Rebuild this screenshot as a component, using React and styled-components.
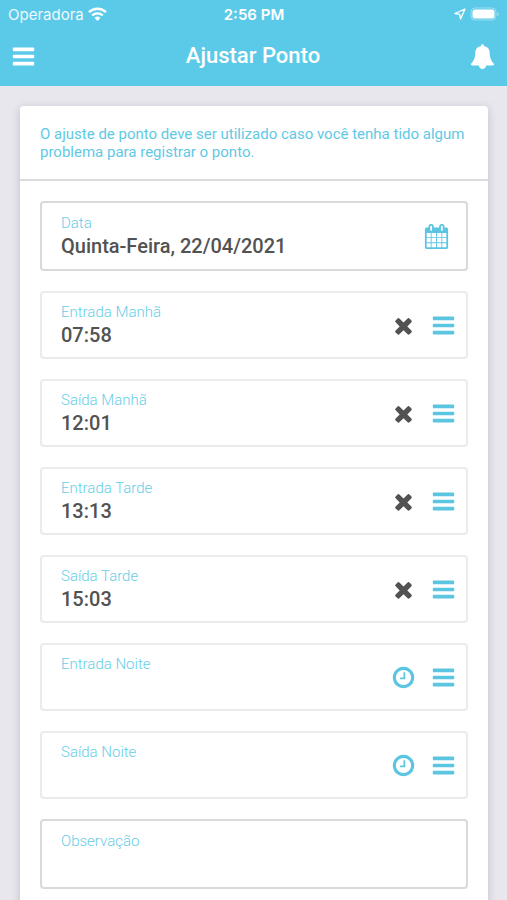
import React, { useState } from 'react'
import styled, { createGlobalStyle } from 'styled-components';

const GlobalStyle = createGlobalStyle`
  * {
    box-sizing: border-box;
  }
  body {
    margin: 0;
    background: #E8E7ED;
    font-family: Roboto, "Liberation Sans", sans-serif;
  }
`;

const Page = styled.div`
  height: 100vh;
  display: flex;
  flex-direction: column;
`;

const Header = styled.header`
  flex: none;
  background: #5BCAE8;
  color: #FFF;
`;

const StatusBar = styled.div`
  display: grid;
  grid-template-columns: 1fr auto 1fr;
  align-items: center;
  height: 28px;
  padding: 0 7px 0 8px;
  font-family: Inter, "Liberation Sans", sans-serif;
  font-size: 15px;
`;

const StatusGroup = styled.div`
  display: flex;
  align-items: center;
  justify-content: ${props => props.$align || 'flex-start'};
  gap: 4px;
`;

const Carrier = styled.span`
  opacity: 0.9;
`;

const Clock = styled.span`
  font-weight: 600;
`;

const NavBar = styled.div`
  display: grid;
  grid-template-columns: 1fr auto 1fr;
  align-items: center;
  height: 58px;
  padding: 0 12px 2px 11px;
`;

const Title = styled.h1`
  margin: 0;
  font-size: 22px;
  line-height: 26px;
  font-weight: 500;
`;

const IconButton = styled.button`
  display: flex;
  flex: none;
  justify-self: ${props => props.$align || 'auto'};
  padding: 0;
  border: none;
  background: none;
  color: ${props => props.$color || '#5BC5E2'};
  cursor: pointer;
`;

const Content = styled.main`
  flex: 1;
  min-height: 0;
  padding: 20px 19px 20px 20px;
  overflow-y: auto;
  scrollbar-width: none;
`;

const Card = styled.section`
  border-radius: 4px;
  background: #FFF;
  box-shadow: 0 2px 10px rgba(60, 55, 90, 0.22);
`;

const Notice = styled.p`
  margin: 0;
  padding: 19px 20px 18px;
  border-bottom: 2px solid #DCDCDC;
  color: #5FC9E5;
  font-size: 15px;
  line-height: 18px;
`;

const Form = styled.form`
  display: flex;
  flex-direction: column;
  gap: 20px;
  padding: 20px;
`;

const Field = styled.div`
  display: flex;
  align-items: center;
  gap: 15px;
  height: ${props => props.$strong ? '70px' : '68px'};
  padding: 0 ${props => props.$strong ? '17px' : '10px'} 0 19px;
  border: 2px solid ${props => props.$strong ? '#D9D9D9' : '#EBEBEB'};
  border-radius: 4px;
`;

const FieldText = styled.div`
  display: flex;
  flex: 1;
  flex-direction: column;
  min-width: 0;
`;

const Label = styled.label`
  color: #67CDE8;
  font-size: 15px;
  line-height: 20px;
  font-weight: 300;
`;

const Input = styled.input`
  width: 100%;
  height: 26px;
  padding: 0;
  border: none;
  outline: none;
  background: none;
  color: #525252;
  font-family: inherit;
  font-size: 20px;
  line-height: 26px;
  font-weight: 500;
  resize: none;
`;

const icons = {
  bars: 'M1664 1344v128q0 26-19 45t-45 19h-1408q-26 0-45-19t-19-45v-128q0-26 19-45t45-19h1408q26 0 45 19t19 45zm0-512v128q0 26-19 45t-45 19h-1408q-26 0-45-19t-19-45v-128q0-26 19-45t45-19h1408q26 0 45 19t19 45zm0-512v128q0 26-19 45t-45 19h-1408q-26 0-45-19t-19-45v-128q0-26 19-45t45-19h1408q26 0 45 19t19 45z',
  times: 'M1490 1322q0 40-28 68l-136 136q-28 28-68 28t-68-28l-294-294-294 294q-28 28-68 28t-68-28l-136-136q-28-28-28-68t28-68l294-294-294-294q-28-28-28-68t28-68l136-136q28-28 68-28t68 28l294 294 294-294q28-28 68-28t68 28l136 136q28 28 28 68t-28 68l-294 294 294 294q28 28 28 68z',
  clock: 'M1024 544v448q0 14-9 23t-23 9h-320q-14 0-23-9t-9-23v-64q0-14 9-23t23-9h224v-352q0-14 9-23t23-9h64q14 0 23 9t9 23zm416 352q0-148-73-273t-198-198-273-73-273 73-198 198-73 273 73 273 198 198 273 73 273-73 198-198 73-273zm224 0q0 209-103 385.5t-279.5 279.5-385.5 103-385.5-103-279.5-279.5-103-385.5 103-385.5 279.5-279.5 385.5-103 385.5 103 279.5 279.5 103 385.5z',
  calendar: 'M192 1664h288v-288h-288v288zm352 0h320v-288h-320v288zm-352-352h288v-320h-288v320zm352 0h320v-320h-320v320zm-352-384h288v-288h-288v288zm736 736h320v-288h-320v288zm-384-736h320v-288h-320v288zm768 736h288v-288h-288v288zm-384-352h320v-320h-320v320zm-352-864v-288q0-13-9.500-22.500t-22.500-9.500h-64q-13 0-22.500 9.500t-9.500 22.500v288q0 13 9.500 22.500t22.500 9.500h64q13 0 22.500-9.500t9.500-22.500zm736 864h288v-320h-288v320zm-384-384h320v-288h-320v288zm384 0h288v-288h-288v288zm32-480v-288q0-13-9.500-22.500t-22.500-9.500h-64q-13 0-22.500 9.500t-9.500 22.500v288q0 13 9.500 22.500t22.500 9.500h64q13 0 22.500-9.500t9.500-22.500zm384-64v1280q0 52-38 90t-90 38h-1408q-52 0-90-38t-38-90v-1280q0-52 38-90t90-38h128v-96q0-66 47-113t113-47h64q66 0 113 47t47 113v96h384v-96q0-66 47-113t113-47h64q66 0 113 47t47 113v96h128q52 0 90 38t38 90z',
  bell: 'M1728 1408q0 52-38 90t-90 38h-448q0 106-75 181t-181 75-181-75-75-181h-448q-52 0-90-38t-38-90q50-42 91-88t85-119.500 74.500-158.500 50-206 19.500-260q0-152 117-282.500t307-158.500q-8-19-8-39 0-40 28-68t68-28 68 28 28 68q0 20-8 39 190 28 307 158.500t117 282.500q0 139 19.500 260t50 206 74.500 158.500 85 119.500 91 88z',
};

const Icon = ({name}) => (
  <svg width="25" height="25" viewBox="0 0 1792 1792" fill="currentColor" aria-hidden="true">
    <path d={icons[name]} />
  </svg>
)

const WifiIcon = () => (
  <svg width="19" height="14" viewBox="0 0 19 14" fill="none" stroke="currentColor" strokeWidth="2.400" aria-hidden="true">
    <path d="M1 5.200a12.200 12.200 0 0 1 17 0" />
    <path d="M4.200 8.500a7.600 7.600 0 0 1 10.600 0" />
    <path d="M9.500 14l-2.900-3a4.200 4.200 0 0 1 5.800 0z" fill="currentColor" stroke="none" />
  </svg>
)

const LocationIcon = () => (
  <svg width="12" height="12" viewBox="0 0 12 12" fill="none" stroke="currentColor" strokeWidth="1.300" strokeLinejoin="round" aria-hidden="true">
    <path d="M11 1L1 5.500l4.700.800.800 4.700z" />
  </svg>
)

const BatteryIcon = () => (
  <svg width="30" height="14" viewBox="0 0 30 14" fill="none" aria-hidden="true">
    <rect x="1" y="1" width="25" height="12" rx="4" stroke="#FFF" strokeOpacity="0.4" />
    <rect x="2.500" y="2.500" width="22" height="9" rx="2.500" fill="#FFF" />
    <path d="M27.500 5v4a2.200 2.200 0 0 0 0-4z" fill="#FFF" fillOpacity="0.5" />
  </svg>
)

const initialTimes = [
  { id: 'entrada-manha', label: 'Entrada Manhã', value: '07:58' },
  { id: 'saida-manha', label: 'Saída Manhã', value: '12:01' },
  { id: 'entrada-tarde', label: 'Entrada Tarde', value: '13:13' },
  { id: 'saida-tarde', label: 'Saída Tarde', value: '15:03' },
  { id: 'entrada-noite', label: 'Entrada Noite', value: '' },
  { id: 'saida-noite', label: 'Saída Noite', value: '' },
];

const TimeField = ({id, label, value, onChange}) => (
  <Field>
    <FieldText>
      <Label htmlFor={id}>{label}</Label>
      <Input id={id} value={value} onChange={e => onChange(id, e.target.value)} />
    </FieldText>
    {value ? (
      <IconButton type="button" $color="#525252" aria-label="Limpar" onClick={() => onChange(id, '')}>
        <Icon name="times" />
      </IconButton>
    ) : (
      <IconButton type="button" aria-label="Escolher horário">
        <Icon name="clock" />
      </IconButton>
    )}
    <IconButton type="button" aria-label="Opções">
      <Icon name="bars" />
    </IconButton>
  </Field>
)

const App = () => {
  const [times, setTimes] = useState(initialTimes);

  const handleChange = (id, value) => {
    setTimes(times.map(time => time.id === id ? { ...time, value } : time));
  }

  return (
    <Page>
      <GlobalStyle />
      <Header>
        <StatusBar>
          <StatusGroup>
            <Carrier>Operadora</Carrier>
            <WifiIcon />
          </StatusGroup>
          <Clock>2:56 PM</Clock>
          <StatusGroup $align="flex-end">
            <LocationIcon />
            <BatteryIcon />
          </StatusGroup>
        </StatusBar>
        <NavBar>
          <IconButton type="button" $color="#FFF" $align="start" aria-label="Menu">
            <Icon name="bars" />
          </IconButton>
          <Title>Ajustar Ponto</Title>
          <IconButton type="button" $color="#FFF" $align="end" aria-label="Notificações">
            <Icon name="bell" />
          </IconButton>
        </NavBar>
      </Header>
      <Content>
        <Card>
          <Notice>
            O ajuste de ponto deve ser utilizado caso você tenha tido algum problema para registrar o ponto.
          </Notice>
          <Form>
            <Field $strong>
              <FieldText>
                <Label htmlFor="data">Data</Label>
                <Input id="data" defaultValue="Quinta-Feira, 22/04/2021" />
              </FieldText>
              <IconButton type="button" aria-label="Abrir calendário">
                <Icon name="calendar" />
              </IconButton>
            </Field>
            {times.map(time => (
              <TimeField key={time.id} {...time} onChange={handleChange} />
            ))}
            <Field $strong>
              <FieldText>
                <Label htmlFor="observacao">Observação</Label>
                <Input as="textarea" id="observacao" rows={1} />
              </FieldText>
            </Field>
          </Form>
        </Card>
      </Content>
    </Page>
  )
}

export default App
